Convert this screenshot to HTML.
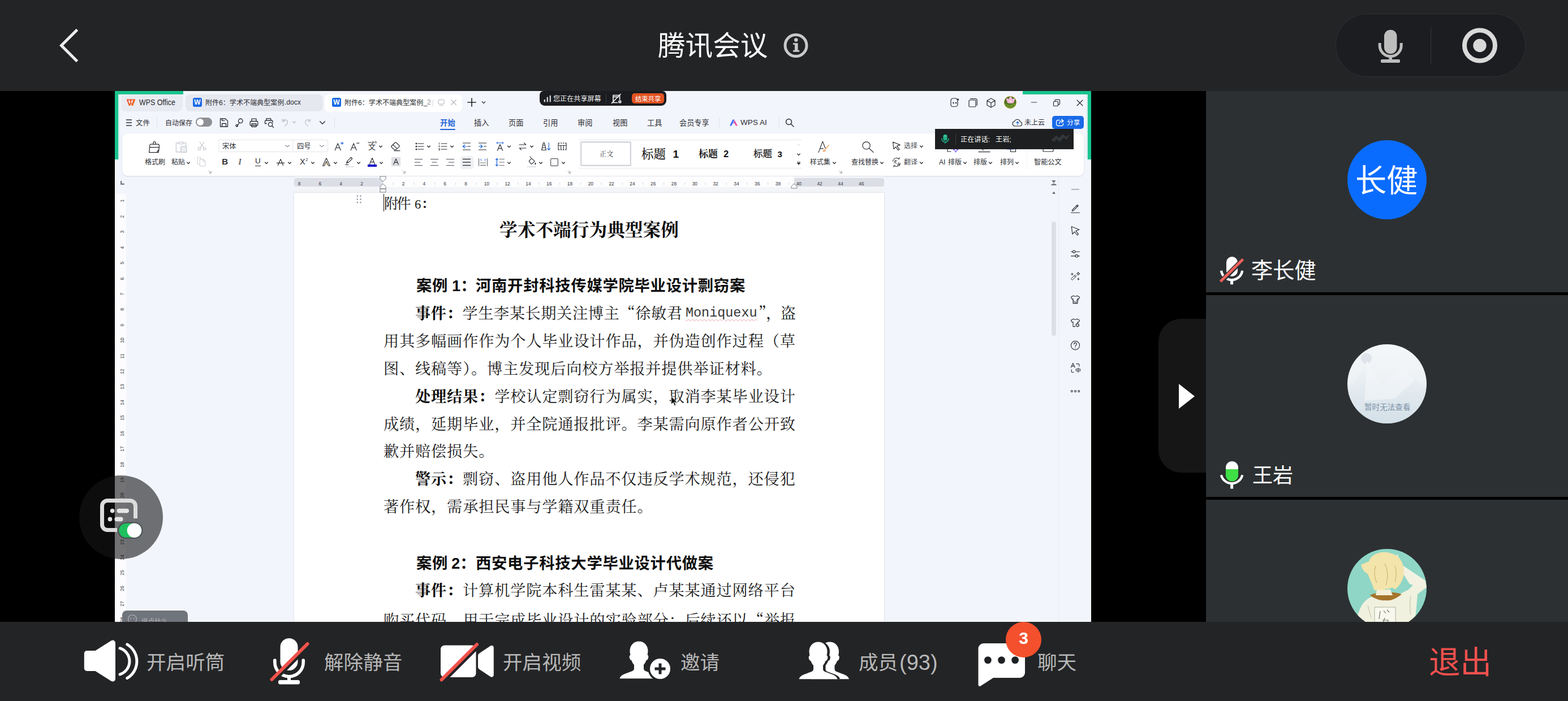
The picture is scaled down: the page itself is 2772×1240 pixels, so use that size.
<!DOCTYPE html><html lang="zh-CN"><head><meta charset="utf-8"><title>腾讯会议</title><style>
html,body{margin:0;padding:0;background:#000}
#app{position:relative;width:2772px;height:1240px;overflow:hidden;background:#000;font-family:"Liberation Sans",sans-serif}
#app div,#app span.l,#app svg{position:absolute}
svg.t{overflow:visible;width:1px;height:1px}
svg.t text{font-family:"Liberation Sans","Noto Sans CJK SC",sans-serif;white-space:pre}
svg.t text.sf{font-family:"Liberation Serif","Noto Serif CJK SC",serif}
svg.t tspan.cq,svg.t text.cq{font-family:"Noto Serif CJK SC","Liberation Serif",serif}
svg.i{overflow:visible}
span.l{white-space:nowrap;display:block}
span.vr{font:400 8.6px/1 'Liberation Sans',sans-serif;color:#3d3f46;transform:translate(-50%,-50%) rotate(-90deg)}
</style></head><body><div id="app">
<!-- wps -->
<main aria-label="共享屏幕：WPS 文档">
<div style="left:203px;top:161px;width:1726px;height:939px;background:#f3f5fc;"></div>
<div style="left:203px;top:161px;width:121px;height:6px;background:#19c38d;"></div>
<div style="left:203px;top:161px;width:6px;height:121px;background:#19c38d;box-shadow:2px 0 2px rgba(25,195,141,.18)"></div>
<div style="left:1808px;top:161px;width:121px;height:6px;background:#19c38d;"></div>
<div style="left:1923px;top:161px;width:6px;height:121px;background:#19c38d;box-shadow:-2px 0 2px rgba(25,195,141,.18)"></div>
<div style="left:214px;top:168px;width:109px;height:29px;background:#e9ebf2;border-radius:0 0 8px 8px"></div>
<svg class="i" style="left:222.5px;top:174.8px" width="18" height="13" viewBox="0 0 18 13" ><defs><linearGradient id="wl" x1="0" y1="0" x2="1" y2="1"><stop offset="0" stop-color="#f0492f"/><stop offset="1" stop-color="#ee7a2a"/></linearGradient></defs><path d="M.6 .5h15.800L12.300 12H9.700L8.500 8.600 7.300 12H4.700zM3.600 2.300l2.400 6.600 1.300-3.700-1-2.900zM9.700 2.300l-1 2.900 1.300 3.700 2.400-6.600z" fill="url(#wl)" fill-rule="evenodd"/></svg>
<span class="l" style="left:246px;top:173.83px;font:400 14px/1 'Liberation Sans',sans-serif;color:#26282d;transform-origin:0 0;transform:scaleX(0.885);">WPS Office</span>
<div style="left:328px;top:167px;width:243px;height:30px;background:#e6e8f0;border-radius:8px"></div>
<div style="left:574px;top:167px;width:243px;height:30.5px;background:#fff;border-radius:8px"></div>
<div style="left:341px;top:173px;width:16px;height:16px;background:#1b6ae6;border-radius:3px"></div>
<span class="l" style="left:349px;top:175.14px;font:700 12px/1 'Liberation Sans',sans-serif;color:#fff;transform:translateX(-50%);">W</span>
<div style="left:587px;top:173px;width:16px;height:16px;background:#1b6ae6;border-radius:3px"></div>
<span class="l" style="left:595px;top:175.14px;font:700 12px/1 'Liberation Sans',sans-serif;color:#fff;transform:translateX(-50%);">W</span>
<svg class="t" style="left:363px;top:185.8px" role="img" aria-label="附件6：学术不端典型案例.docx"><text x="0" y="0" font-size="12.05" fill="#2a2c31">附件6：学术不端典型案例</text></svg>
<span class="l" style="left:502.74px;top:173.87px;font:400 13.4px/1 'Liberation Sans',sans-serif;color:#2a2c31;transform-origin:0 0;transform:scaleX(0.9);">.docx</span>
<svg class="t" style="left:609px;top:185.8px" role="img" aria-label="附件6：学术不端典型案例_2("><text x="0" y="0" font-size="12.05" fill="#2a2c31">附件6：学术不端典型案例</text></svg>
<span class="l" style="left:748.74px;top:173.87px;font:400 13.4px/1 'Liberation Sans',sans-serif;color:#3a3c42;transform-origin:0 0;transform:scaleX(0.9);">_</span>
<span class="l" style="left:755.44px;top:173.87px;font:400 13.4px/1 'Liberation Sans',sans-serif;color:#8f929a;transform-origin:0 0;transform:scaleX(0.9);">2</span>
<span class="l" style="left:762.74px;top:173.87px;font:400 13.4px/1 'Liberation Sans',sans-serif;color:#dde0e6;">(</span>
<svg class="i" style="left:770px;top:171px" width="20" height="20" viewBox="-10 -10 20 20" fill="none" stroke="#b4b7bf" stroke-width="1.1" stroke-linecap="round" stroke-linejoin="round" ><rect x="-5" y="-4.5" width="10" height="7.5" rx="1.5"/><path d="M-3 5.2h6"/></svg>
<svg class="i" style="left:791.5px;top:171px" width="20" height="20" viewBox="-10 -10 20 20" fill="none" stroke="#a9acb5" stroke-width="1.2" stroke-linecap="round" stroke-linejoin="round" ><path d="M-4.3 -4.3L4.3 4.3M4.3 -4.3L-4.3 4.3"/></svg>
<svg class="i" style="left:824px;top:171.3px" width="20" height="20" viewBox="-10 -10 20 20" fill="none" stroke="#26282d" stroke-width="1.7" stroke-linecap="round" stroke-linejoin="round" ><path d="M-7 0H7M0 -7V7"/></svg>
<svg class="i" style="left:850px;top:176.3px" width="10" height="10" viewBox="-5 -5 10 10" fill="none" stroke="#2b2d33" stroke-width="1.3" stroke-linecap="round" stroke-linejoin="round" ><path d="M-2.6 -1 L0 1.6 L2.6 -1"/></svg>
<svg class="i" style="left:1676.5px;top:170.5px" width="22" height="22" viewBox="-11 -11 22 22" fill="none" stroke="#2b2d33" stroke-width="1.2" stroke-linecap="round" stroke-linejoin="round" ><path d="M-7 -4.5c0-2 2-3.5 5-3.5h4l3 3v8c0 2-2 3.5-4 3.5h-5c-2 0-3-1.5-3-3.5z"/><circle cx="-2.5" cy="0" r=".7" fill="#2b2d33"/><circle cx="2" cy="0" r=".7" fill="#2b2d33"/><path d="M5.5 -8.5l.8 1.8 1.8.8-1.8.8-.8 1.8-.8-1.8-1.8-.8 1.8-.8z" fill="#2b2d33" stroke="none"/></svg>
<svg class="i" style="left:1710px;top:171.5px" width="20" height="20" viewBox="-10 -10 20 20" fill="none" stroke="#2b2d33" stroke-width="1.2" stroke-linecap="round" stroke-linejoin="round" ><rect x="-7" y="-5" width="12" height="12" rx="1.5"/><path d="M-4.5 -7.3h9a2.8 2.8 0 0 1 2.8 2.8v9"/></svg>
<svg class="i" style="left:1742px;top:171.5px" width="20" height="20" viewBox="-10 -10 20 20" fill="none" stroke="#2b2d33" stroke-width="1.2" stroke-linecap="round" stroke-linejoin="round" ><path d="M0 -8l7 4v8l-7 4-7-4v-8z M-7 -4l7 4 7-4M0 0v8"/></svg>
<svg class="i" style="left:1774px;top:169px" width="24" height="24" viewBox="0 0 24 24" ><defs><clipPath id="ca"><circle cx="12" cy="12" r="10.600"/></clipPath></defs><circle cx="12" cy="12" r="11.400" fill="#f3df8e"/><g clip-path="url(#ca)"><rect width="24" height="24" fill="#4e6f22"/><path d="M0 15c5-3 9 3 12 1s8-4 12 0v8H0z" fill="#6c8f2c"/><g fill="#f4b6d6"><ellipse cx="12.500" cy="6.500" rx="2.600" ry="4.600"/><ellipse cx="8.600" cy="8.600" rx="2.400" ry="4.400" transform="rotate(-48 8.600 8.600)"/><ellipse cx="16.400" cy="8.600" rx="2.400" ry="4.400" transform="rotate(48 16.400 8.600)"/><ellipse cx="10" cy="11.500" rx="2.200" ry="4" transform="rotate(-80 10 11.500)"/><ellipse cx="15" cy="11.500" rx="2.200" ry="4" transform="rotate(80 15 11.500)"/></g><circle cx="12.500" cy="10" r="1.700" fill="#f7dfe9"/></g></svg>
<svg class="i" style="left:1818px;top:170.5px" width="20" height="20" viewBox="-10 -10 20 20" fill="none" stroke="#3f4147" stroke-width="1.2" stroke-linecap="round" stroke-linejoin="round" ><path d="M-4.800 0H4.800"/></svg>
<svg class="i" style="left:1858px;top:171.5px" width="20" height="20" viewBox="-10 -10 20 20" fill="none" stroke="#2b2d33" stroke-width="1.2" stroke-linecap="round" stroke-linejoin="round" ><rect x="-5.5" y="-2.5" width="8" height="8" rx="1"/><path d="M-2.8 -2.5v-2.2a1 1 0 0 1 1-1h6.3a1 1 0 0 1 1 1v6.3a1 1 0 0 1-1 1H2.5"/></svg>
<svg class="i" style="left:1898.7px;top:171.5px" width="20" height="20" viewBox="-10 -10 20 20" fill="none" stroke="#2b2d33" stroke-width="1.3" stroke-linecap="round" stroke-linejoin="round" ><path d="M-4.8 -4.8L4.8 4.8M4.8 -4.8L-4.8 4.8"/></svg>
<div style="left:953.5px;top:161px;width:224.5px;height:26px;background:#1b1c1f;border-radius:7px 7px 9px 9px"></div>
<svg class="i" style="left:960.5px;top:168px" width="14" height="13" viewBox="0 0 14 13" ><rect x=".7" y="8" width="2.300" height="4.400" fill="#d4d4d4"/><rect x="5.600" y="3.700" width="2.300" height="8.700" fill="#d4d4d4"/><rect x="10.600" y=".8" width="2.300" height="11.600" fill="#d4d4d4"/></svg>
<svg class="t" style="left:978px;top:179px" role="img" aria-label="您正在共享屏幕"><text x="0" y="0" font-size="12.1" fill="#f2f2f2">您正在共享屏幕</text></svg>
<div style="left:1070.5px;top:166px;width:1px;height:16px;background:#3a3b3f;"></div>
<svg class="i" style="left:1079px;top:163.5px" width="22" height="22" viewBox="-11 -11 22 22" fill="none" stroke="#f2f2f2" stroke-width="1.5" stroke-linecap="round" stroke-linejoin="round" ><path d="M-6 -6.500H5.500V1M-6 -6.500V6.500H1.500M-6 -3.600H3" stroke-width="1.700"/><path d="M-8.500 7.500L7 -8.500" stroke-width="1.700"/><circle cx="5.800" cy="5" r="2.700" fill="#f2f2f2" stroke="none"/><path d="M5.200 3.600c1.200.4 1.200 2.200 0 2.800" stroke="#1b1c1f" stroke-width=".9"/></svg>
<div style="left:1117px;top:165px;width:57px;height:18.3px;background:#e35220;border-radius:5px"></div>
<svg class="t" style="left:1123px;top:178.6px" role="img" aria-label="结束共享"><text x="0" y="0" font-size="11.3" fill="#fff">结束共享</text></svg>
<svg class="i" style="left:217.5px;top:206.5px" width="20" height="20" viewBox="-10 -10 20 20" fill="none" stroke="#2b2d33" stroke-width="1.3" stroke-linecap="round" stroke-linejoin="round" ><path d="M-4.5 -5H4.5M-4.5 0H4.5M-4.5 5H4.5"/></svg>
<svg class="t" style="left:239.5px;top:221.5px" role="img" aria-label="文件"><text x="0" y="0" font-size="12.4" fill="#2b2d33">文件</text></svg>
<div style="left:276.5px;top:208px;width:1px;height:17px;background:#dfe2ea;"></div>
<svg class="t" style="left:292px;top:221.5px" role="img" aria-label="自动保存"><text x="0" y="0" font-size="12" fill="#2b2d33">自动保存</text></svg>
<div style="left:346px;top:208px;width:28.5px;height:16px;background:#8f9094;border-radius:8px"></div>
<div style="left:347.6px;top:209.6px;width:12.8px;height:12.8px;background:#fff;border-radius:50%"></div>
<svg class="i" style="left:386.3px;top:206.5px" width="20" height="20" viewBox="-10 -10 20 20" fill="none" stroke="#2b2d33" stroke-width="1.3" stroke-linecap="round" stroke-linejoin="round" ><path d="M-6.5 -7h9l4 4v10h-13z M-3.5 7v-5.5h7V7"/><path d="M-3.5 -7v3.3h4.5"/></svg>
<svg class="i" style="left:413px;top:206.5px" width="20" height="20" viewBox="-10 -10 20 20" fill="none" stroke="#2b2d33" stroke-width="1.3" stroke-linecap="round" stroke-linejoin="round" ><circle cx="2.2" cy="-3.2" r="3.8"/><path d="M0 0c-1.5 2.5-2 4.5-4.3 6.5"/><circle cx="-4.3" cy="5.2" r="1.8"/></svg>
<svg class="i" style="left:439px;top:206.5px" width="20" height="20" viewBox="-10 -10 20 20" fill="none" stroke="#2b2d33" stroke-width="1.3" stroke-linecap="round" stroke-linejoin="round" ><rect x="-6.8" y="-2.5" width="13.6" height="7.5" rx="1.5"/><path d="M-4 -2.5v-4.3h8v4.3M-4 2h8v5.3h-8z"/></svg>
<svg class="i" style="left:466px;top:206.5px" width="20" height="20" viewBox="-10 -10 20 20" fill="none" stroke="#2b2d33" stroke-width="1.3" stroke-linecap="round" stroke-linejoin="round" ><path d="M-7.5 1.5v-4a1.5 1.5 0 0 1 1.5-1.5h10.5a1.5 1.5 0 0 1 1.5 1.5v2.2M-5 -4v-3.3h7.7v3.3M-7.5 1.5h2.8"/><circle cx="2" cy="3" r="3.6"/><path d="M4.8 5.8l2.7 2.7"/></svg>
<svg class="i" style="left:493.5px;top:205.5px" width="20" height="20" viewBox="-10 -10 20 20" fill="none" stroke="#b9bcc4" stroke-width="1.3" stroke-linecap="round" stroke-linejoin="round" ><path d="M-4.3 -1.2L-4.3 -5.6M-4.3 -1.2L0 -1.6M-4.3 -1.4C-1 -6.5 5 -4 4.2 1 3.8 3.6 1.5 5.5 -0.5 6.8"/></svg>
<svg class="i" style="left:514.5px;top:211px" width="10" height="10" viewBox="-5 -5 10 10" fill="none" stroke="#b9bcc4" stroke-width="1.3" stroke-linecap="round" stroke-linejoin="round" ><path d="M-2.2 -1 L0 1.6 L2.2 -1"/></svg>
<svg class="i" style="left:533.5px;top:205.5px" width="20" height="20" viewBox="-10 -10 20 20" fill="none" stroke="#c3c6cd" stroke-width="1.3" stroke-linecap="round" stroke-linejoin="round" ><path d="M4.3 -1.2L4.3 -5.6M4.3 -1.2L0 -1.6M4.3 -1.4C1 -6.5 -5 -4 -4.2 1 -3.8 3.6 -1.5 5.5 .5 6.8"/></svg>
<svg class="i" style="left:559.5px;top:207px" width="20" height="20" viewBox="-10 -10 20 20" fill="none" stroke="#2b2d33" stroke-width="1.4" stroke-linecap="round" stroke-linejoin="round" ><path d="M-4.4 -2.2L0 2.2L4.4 -2.2"/></svg>
<div style="left:590.5px;top:208px;width:1px;height:17px;background:#dfe2ea;"></div>
<svg class="t" style="left:777.5px;top:221.5px" role="img" aria-label="开始"><text x="0" y="0" font-size="13.4" font-weight="700" fill="#1d64d8">开始</text></svg>
<div style="left:777.5px;top:227.5px;width:27.5px;height:2.6px;background:#1d64d8;border-radius:1.3px"></div>
<svg class="t" style="left:838.3px;top:221.5px" role="img" aria-label="插入"><text x="0" y="0" font-size="13.2" fill="#2b2d33">插入</text></svg>
<svg class="t" style="left:899.35px;top:221.5px" role="img" aria-label="页面"><text x="0" y="0" font-size="13.2" fill="#2b2d33">页面</text></svg>
<svg class="t" style="left:960.4px;top:221.5px" role="img" aria-label="引用"><text x="0" y="0" font-size="13.2" fill="#2b2d33">引用</text></svg>
<svg class="t" style="left:1021.45px;top:221.5px" role="img" aria-label="审阅"><text x="0" y="0" font-size="13.2" fill="#2b2d33">审阅</text></svg>
<svg class="t" style="left:1082.5px;top:221.5px" role="img" aria-label="视图"><text x="0" y="0" font-size="13.2" fill="#2b2d33">视图</text></svg>
<svg class="t" style="left:1143.55px;top:221.5px" role="img" aria-label="工具"><text x="0" y="0" font-size="13.2" fill="#2b2d33">工具</text></svg>
<svg class="t" style="left:1201px;top:221.5px" role="img" aria-label="会员专享"><text x="0" y="0" font-size="13.2" fill="#2b2d33">会员专享</text></svg>
<div style="left:1271px;top:208px;width:1px;height:17px;background:#dfe2ea;"></div>
<svg class="i" style="left:1289px;top:209.5px" width="16" height="14" viewBox="0 0 16 14" ><path d="M1 12.5L6.3 1.5h3.2L4.2 12.5z" fill="#3f6df2"/><path d="M8.2 5.6l1.6-3.2 5.2 10.1h-3.3z" fill="#f0559f"/><path d="M6.8 8.3l1.5-2.9 1.5 2.9z" fill="#8a5cf0"/></svg>
<span class="l" style="left:1309px;top:209.69px;font:400 13.6px/1 'Liberation Sans',sans-serif;color:#2b2d33;">WPS AI</span>
<div style="left:1377px;top:208px;width:1px;height:17px;background:#dfe2ea;"></div>
<svg class="i" style="left:1385.5px;top:206.5px" width="20" height="20" viewBox="-10 -10 20 20" fill="none" stroke="#2b2d33" stroke-width="1.4" stroke-linecap="round" stroke-linejoin="round" ><circle cx="-1.5" cy="-1.5" r="5"/><path d="M2.2 2.2L7 7"/></svg>
<svg class="i" style="left:1789px;top:206.5px" width="20" height="20" viewBox="-10 -10 20 20" fill="none" stroke="#2b2d33" stroke-width="1.2" stroke-linecap="round" stroke-linejoin="round" ><path d="M-4.2 6h8.2a3.8 3.8 0 0 0 .6-7.5 5.2 5.2 0 0 0-10-.8A4.2 4.2 0 0 0-4.2 6z"/><path d="M0 3.6V-1.6M-2.2 .4L0 -1.8 2.2 .4" stroke="#1d64d8"/></svg>
<svg class="t" style="left:1811px;top:221.3px" role="img" aria-label="未上云"><text x="0" y="0" font-size="12" fill="#2b2d33">未上云</text></svg>
<div style="left:1859.5px;top:204.5px;width:56.5px;height:23.5px;background:#1a6ae8;border-radius:5px"></div>
<svg class="i" style="left:1863.5px;top:206.5px" width="20" height="20" viewBox="-10 -10 20 20" fill="none" stroke="#fff" stroke-width="1.3" stroke-linecap="round" stroke-linejoin="round" ><path d="M-1 -4.5h-2.6a2.8 2.8 0 0 0-2.8 2.8v4.4a2.8 2.8 0 0 0 2.8 2.8h6.4a2.8 2.8 0 0 0 2.8-2.8V1.5"/><path d="M2.5 -6.2L6.2 -3 2.5 .2M6 -3H3C.5 -3-1.2 -1.2-1.2 1.8"/></svg>
<svg class="t" style="left:1886.3px;top:221.3px" role="img" aria-label="分享"><text x="0" y="0" font-size="11.7" fill="#fff">分享</text></svg>
<div style="left:216px;top:236px;width:1700px;height:75px;background:#fff;border-radius:9px;box-shadow:0 1px 3px rgba(60,70,110,.16)"></div>
<svg class="i" style="left:261.2px;top:248px" width="24" height="24" viewBox="-12 -12 24 24" fill="none" stroke="#2b2d33" stroke-width="1.25" stroke-linecap="round" stroke-linejoin="round" ><path d="M-2 -4.800v-2.600a2 2 0 1 1 4 0v2.600"/><path d="M-8.400 .6v-2.900a2.500 2.500 0 0 1 2.500-2.500h11.800a2.500 2.500 0 0 1 2.500 2.500v2.900"/><path d="M-8.400 .6h16.800l-1.200 9H-9.400z"/><path d="M3.800 9.400c1.700-1.100 2.700-2.600 3.100-4.400"/></svg>
<svg class="t" style="left:255.6px;top:291.3px" role="img" aria-label="格式刷"><text x="0" y="0" font-size="12" fill="#2b2d33">格式刷</text></svg>
<svg class="i" style="left:308.3px;top:248px" width="24" height="24" viewBox="-12 -12 24 24" fill="none" stroke="#c3c6cd" stroke-width="1.2" stroke-linecap="round" stroke-linejoin="round" ><path d="M-3.6 -7.2h-5v16h8.2M3.6 -7.2h5V-1"/><rect x="-3.6" y="-9" width="7.2" height="3.6" rx="1"/><rect x="-.2" y="-.8" width="10" height="10.2" rx="1" fill="#eceef2"/></svg>
<svg class="t" style="left:302.6px;top:291.3px" role="img" aria-label="粘贴"><text x="0" y="0" font-size="12" fill="#2b2d33">粘贴</text></svg>
<svg class="i" style="left:328px;top:282.5px" width="10" height="10" viewBox="-5 -5 10 10" fill="none" stroke="#2b2d33" stroke-width="1.3" stroke-linecap="round" stroke-linejoin="round" ><path d="M-2.3 -1 L0 1.6 L2.3 -1"/></svg>
<svg class="i" style="left:347px;top:248px" width="20" height="20" viewBox="-10 -10 20 20" fill="none" stroke="#c3c6cd" stroke-width="1.1" stroke-linecap="round" stroke-linejoin="round" ><path d="M-4 -7L3.2 3.6M4 -7L-3.2 3.6"/><circle cx="-4.6" cy="5" r="2.3"/><circle cx="4.6" cy="5" r="2.3"/></svg>
<svg class="i" style="left:347px;top:276px" width="20" height="20" viewBox="-10 -10 20 20" fill="none" stroke="#cfd2d8" stroke-width="1.1" stroke-linecap="round" stroke-linejoin="round" ><path d="M-2.6 -4.5v-3.3h-5.2V4.2h3"/><path d="M-3.8 -4.4h6l3.6 3.6v8.6h-9.6z M2 -4.2V-.6h3.6"/></svg>
<svg class="i" style="left:366.5px;top:300.3px" width="8" height="8" viewBox="-4 -4 8 8" fill="none" stroke="#8b8e96" stroke-width="0.9" stroke-linecap="round" stroke-linejoin="round" ><path d="M-2 -2L2 2M2.2 -1.2V2.2H-1.2"/></svg>
<svg class="i" style="left:709.8px;top:300.3px" width="8" height="8" viewBox="-4 -4 8 8" fill="none" stroke="#8b8e96" stroke-width="0.9" stroke-linecap="round" stroke-linejoin="round" ><path d="M-2 -2L2 2M2.2 -1.2V2.2H-1.2"/></svg>
<svg class="i" style="left:1001.8px;top:300.3px" width="8" height="8" viewBox="-4 -4 8 8" fill="none" stroke="#8b8e96" stroke-width="0.9" stroke-linecap="round" stroke-linejoin="round" ><path d="M-2 -2L2 2M2.2 -1.2V2.2H-1.2"/></svg>
<svg class="i" style="left:1481.5px;top:300.3px" width="8" height="8" viewBox="-4 -4 8 8" fill="none" stroke="#8b8e96" stroke-width="0.9" stroke-linecap="round" stroke-linejoin="round" ><path d="M-2 -2L2 2M2.2 -1.2V2.2H-1.2"/></svg>
<div style="left:385.5px;top:246.5px;width:132px;height:22px;background:#fff;box-shadow:inset 0 0 0 1px #e3e5ea;border-radius:3px 0 0 3px"></div>
<div style="left:516.5px;top:246.5px;width:63px;height:22px;background:#fff;box-shadow:inset 0 0 0 1px #e3e5ea;border-radius:0 3px 3px 0"></div>
<svg class="t" style="left:393px;top:262.6px" role="img" aria-label="宋体"><text x="0" y="0" font-size="12.2" fill="#2b2d33">宋体</text></svg>
<svg class="i" style="left:502.8px;top:253.2px" width="10" height="10" viewBox="-5 -5 10 10" fill="none" stroke="#7d8089" stroke-width="1.1" stroke-linecap="round" stroke-linejoin="round" ><path d="M-3.6 -1 L0 1.6 L3.6 -1"/></svg>
<svg class="t" style="left:525.4px;top:262.6px" role="img" aria-label="四号"><text x="0" y="0" font-size="12.2" fill="#2b2d33">四号</text></svg>
<svg class="i" style="left:563.6px;top:253.2px" width="10" height="10" viewBox="-5 -5 10 10" fill="none" stroke="#7d8089" stroke-width="1.1" stroke-linecap="round" stroke-linejoin="round" ><path d="M-3.6 -1 L0 1.6 L3.6 -1"/></svg>
<svg class="i" style="left:587.5px;top:247.5px" width="22" height="22" viewBox="-11 -11 22 22" fill="none" stroke="#2b2d33" stroke-width="1.2" stroke-linecap="round" stroke-linejoin="round" ><path d="M-6.84 6.8 L-1.8 -5.2 L3.24 6.8 M-5.04 2.48 H1.44"/><path d="M3.6 -5.6h4.4M5.8 -7.8v4.4" stroke="#1d64d8"/></svg>
<svg class="i" style="left:615.5px;top:247.5px" width="22" height="22" viewBox="-11 -11 22 22" fill="none" stroke="#2b2d33" stroke-width="1.2" stroke-linecap="round" stroke-linejoin="round" ><path d="M-6.84 6.8 L-1.8 -5.2 L3.24 6.8 M-5.04 2.48 H1.44"/><path d="M3.8 -5.8h4"/></svg>
<svg class="t" style="left:650.5px;top:264.2px" role="img" aria-label="拼音"><text x="0" y="0" font-size="13" fill="#2b2d33">文</text></svg>
<svg class="i" style="left:648.5px;top:241.8px" width="18" height="18" viewBox="-9 -9 18 18" fill="none" stroke="#2b2d33" stroke-width="0.8" stroke-linecap="round" stroke-linejoin="round" ><path d="M-7 0l1.2 2.2 1.2-2.2 1.2 2.2 1.2-2.2M0 .2a1.6 1.6 0 0 1 3 .6h-3.2a1.6 1.6 0 0 0 3 .9M5 2.2V-.6c.5-.6 2.2-.8 2.2 .6v2.2"/></svg>
<svg class="i" style="left:667.5px;top:253.8px" width="10" height="10" viewBox="-5 -5 10 10" fill="none" stroke="#2b2d33" stroke-width="1.3" stroke-linecap="round" stroke-linejoin="round" ><path d="M-2.3 -1 L0 1.6 L2.3 -1"/></svg>
<svg class="i" style="left:687.7px;top:247.7px" width="22" height="22" viewBox="-11 -11 22 22" fill="none" stroke="#2b2d33" stroke-width="1.2" stroke-linecap="round" stroke-linejoin="round" ><path d="M-2.2 5.6l-4.6-4.4a1.3 1.3 0 0 1 0-1.9l6.3-6.1a1.3 1.3 0 0 1 1.8 0l5.5 5.3a1.3 1.3 0 0 1 0 1.9L1.4 5.6z M-4.3 -3l6.6 6.4M-2.2 7.6H8"/></svg>
<svg class="i" style="left:732px;top:248.5px" width="20" height="20" viewBox="-10 -10 20 20" fill="none" stroke="#2b2d33" stroke-width="1.2" stroke-linecap="round" stroke-linejoin="round" ><path d="M-3 -5H7M-3 0H7M-3 5H7"/><circle cx="-6" cy="-5" r=".9"/><circle cx="-6" cy="0" r=".9"/><circle cx="-6" cy="5" r=".9"/></svg>
<svg class="i" style="left:753px;top:253.8px" width="10" height="10" viewBox="-5 -5 10 10" fill="none" stroke="#2b2d33" stroke-width="1.3" stroke-linecap="round" stroke-linejoin="round" ><path d="M-2.3 -1 L0 1.6 L2.3 -1"/></svg>
<svg class="i" style="left:773px;top:248.5px" width="20" height="20" viewBox="-10 -10 20 20" fill="none" stroke="#2b2d33" stroke-width="1.2" stroke-linecap="round" stroke-linejoin="round" ><path d="M-3 -5H7M-3 0H7M-3 5H7"/><path d="M-6.6 -6.6v3M-7.2 -1.2h1.4l-1.4 2h1.4M-7.2 3.6h1.4v3.2h-1.4M-7.2 5.2h1.2" stroke-width=".8"/></svg>
<svg class="i" style="left:794px;top:253.8px" width="10" height="10" viewBox="-5 -5 10 10" fill="none" stroke="#2b2d33" stroke-width="1.3" stroke-linecap="round" stroke-linejoin="round" ><path d="M-2.3 -1 L0 1.6 L2.3 -1"/></svg>
<svg class="i" style="left:815px;top:248.5px" width="20" height="20" viewBox="-10 -10 20 20" fill="none" stroke="#2b2d33" stroke-width="1.2" stroke-linecap="round" stroke-linejoin="round" ><path d="M-6.5 -6H6.5M-6.5 6H6.5"/><path d="M1.5 0H6.5"/><path d="M-6.5 0H-.5M-3.6 -2.8L-6.5 0l2.9 2.8" stroke="#1d64d8"/></svg>
<svg class="i" style="left:843px;top:248.5px" width="20" height="20" viewBox="-10 -10 20 20" fill="none" stroke="#2b2d33" stroke-width="1.2" stroke-linecap="round" stroke-linejoin="round" ><path d="M-6.5 -6H6.5M-6.5 6H6.5"/><path d="M2.6 0H6.5"/><path d="M-6.5 0H-.2M-3.2 -2.8L-.2 0l-3 2.8" stroke="#1d64d8"/></svg>
<svg class="i" style="left:873px;top:247.5px" width="22" height="22" viewBox="-11 -11 22 22" fill="none" stroke="#2b2d33" stroke-width="1.2" stroke-linecap="round" stroke-linejoin="round" ><path d="M-4.62 7.5 L0 -3.5 L4.62 7.5 M-2.97 3.54 H2.97"/><path d="M-6 -6.2H6M-4.2 -7.8L-6 -6.2l1.8 1.6M4.2 -7.8L6 -6.2 4.2 -4.6" stroke="#1d64d8" stroke-width="1"/></svg>
<svg class="i" style="left:894.6px;top:253.8px" width="10" height="10" viewBox="-5 -5 10 10" fill="none" stroke="#2b2d33" stroke-width="1.3" stroke-linecap="round" stroke-linejoin="round" ><path d="M-2.3 -1 L0 1.6 L2.3 -1"/></svg>
<svg class="i" style="left:913.7px;top:248.5px" width="20" height="20" viewBox="-10 -10 20 20" fill="none" stroke="#2b2d33" stroke-width="1.2" stroke-linecap="round" stroke-linejoin="round" ><path d="M-6 -3H5.6M2.6 -6l3 3M6 3H-5.6M-2.6 6l-3-3"/></svg>
<svg class="i" style="left:934.5px;top:253.8px" width="10" height="10" viewBox="-5 -5 10 10" fill="none" stroke="#2b2d33" stroke-width="1.3" stroke-linecap="round" stroke-linejoin="round" ><path d="M-2.3 -1 L0 1.6 L2.3 -1"/></svg>
<svg class="i" style="left:954px;top:247.5px" width="22" height="22" viewBox="-11 -11 22 22" fill="none" stroke="#2b2d33" stroke-width="1.15" stroke-linecap="round" stroke-linejoin="round" ><path d="M-7.4 6.5l3-13h1.8l3 13zM-6.4 2.2h5.6M-5.6 -2h4"/><path d="M5.2 -6.5V6.2M2.6 3.4l2.6 2.9 2.6-2.9" stroke="#1d64d8"/></svg>
<svg class="i" style="left:982.5px;top:247.5px" width="22" height="22" viewBox="-11 -11 22 22" fill="none" stroke="#2b2d33" stroke-width="1.2" stroke-linecap="round" stroke-linejoin="round" ><path d="M-7 -5.8H7M-7 5.8H7" stroke-dasharray="2.4 1.6" stroke-linecap="butt"/><path d="M-7 -5.8V5.8M7 -5.8V5.8M-7 -1.8H7M-2.3 -1.8V5.8M2.3 -1.8V5.8" stroke-width="1.1"/></svg>
<span class="l" style="left:392.3px;top:278.43px;font:700 15px/1 'Liberation Sans',sans-serif;color:#2b2d33;">B</span>
<span class="l" style="left:421.6px;top:278.63px;font:400 15px/1 'Liberation Serif',sans-serif;color:#2b2d33;font-style:italic">I</span>
<span class="l" style="left:451px;top:278.37px;font:400 13.4px/1 'Liberation Sans',sans-serif;color:#2b2d33;">U</span>
<div style="left:451px;top:293.2px;width:10px;height:1.2px;background:#2b2d33;"></div>
<svg class="i" style="left:466.4px;top:282.5px" width="10" height="10" viewBox="-5 -5 10 10" fill="none" stroke="#2b2d33" stroke-width="1.3" stroke-linecap="round" stroke-linejoin="round" ><path d="M-2.3 -1 L0 1.6 L2.3 -1"/></svg>
<svg class="i" style="left:486.3px;top:276.8px" width="20" height="20" viewBox="-10 -10 20 20" fill="none" stroke="#2b2d33" stroke-width="1.15" stroke-linecap="round" stroke-linejoin="round" ><path d="M-4.62 5.5 L0 -5.5 L4.62 5.5"/><path d="M-6.6 1.4H6.6"/></svg>
<svg class="i" style="left:507px;top:282.5px" width="10" height="10" viewBox="-5 -5 10 10" fill="none" stroke="#2b2d33" stroke-width="1.3" stroke-linecap="round" stroke-linejoin="round" ><path d="M-2.3 -1 L0 1.6 L2.3 -1"/></svg>
<span class="l" style="left:530px;top:278.88px;font:400 14.5px/1 'Liberation Sans',sans-serif;color:#2b2d33;">X</span>
<span class="l" style="left:540.2px;top:279.21px;font:400 7.5px/1 'Liberation Sans',sans-serif;color:#2b2d33;">2</span>
<svg class="i" style="left:547.7px;top:282.5px" width="10" height="10" viewBox="-5 -5 10 10" fill="none" stroke="#2b2d33" stroke-width="1.3" stroke-linecap="round" stroke-linejoin="round" ><path d="M-2.3 -1 L0 1.6 L2.3 -1"/></svg>
<svg class="i" style="left:567px;top:276.8px" width="20" height="20" viewBox="-10 -10 20 20" fill="none" stroke="#2b2d33" stroke-width="1.15" stroke-linecap="round" stroke-linejoin="round" ><path d="M-6.4 6.2L0 -7.2 6.4 6.2H3.6L0 -1.6 -3.6 6.2z"/><path d="M-1.9 2.6h3.8" stroke="#f0a040"/></svg>
<svg class="i" style="left:588px;top:282.5px" width="10" height="10" viewBox="-5 -5 10 10" fill="none" stroke="#2b2d33" stroke-width="1.3" stroke-linecap="round" stroke-linejoin="round" ><path d="M-2.3 -1 L0 1.6 L2.3 -1"/></svg>
<svg class="i" style="left:607.5px;top:275px" width="20" height="20" viewBox="-10 -10 20 20" fill="none" stroke="#2b2d33" stroke-width="1.1" stroke-linecap="round" stroke-linejoin="round" ><path d="M-5.6 3.6l1.2-3.2 7-7 2.2 2.2-7 7z M-4.2 .6l2 2M-7 6.4h4.5"/></svg>
<div style="left:610.5px;top:293.5px;width:14.5px;height:2.6px;background:#f2f2f4;box-shadow:inset 0 0 0 .6px #cfd2d8"></div>
<svg class="i" style="left:628.6px;top:282.5px" width="10" height="10" viewBox="-5 -5 10 10" fill="none" stroke="#2b2d33" stroke-width="1.3" stroke-linecap="round" stroke-linejoin="round" ><path d="M-2.3 -1 L0 1.6 L2.3 -1"/></svg>
<svg class="i" style="left:648px;top:274.6px" width="20" height="20" viewBox="-10 -10 20 20" fill="none" stroke="#2b2d33" stroke-width="1.2" stroke-linecap="round" stroke-linejoin="round" ><path d="M-4.62 5.5 L0 -5.5 L4.62 5.5 M-2.97 1.54 H2.97"/></svg>
<div style="left:650.3px;top:291.4px;width:15.6px;height:3.2px;background:#0a0acc;"></div>
<svg class="i" style="left:669px;top:282.5px" width="10" height="10" viewBox="-5 -5 10 10" fill="none" stroke="#2b2d33" stroke-width="1.3" stroke-linecap="round" stroke-linejoin="round" ><path d="M-2.3 -1 L0 1.6 L2.3 -1"/></svg>
<div style="left:691.8px;top:278.2px;width:16px;height:16px;background:#dfe0e3;"></div>
<svg class="i" style="left:689.8px;top:276.4px" width="20" height="20" viewBox="-10 -10 20 20" fill="none" stroke="#2b2d33" stroke-width="1.15" stroke-linecap="round" stroke-linejoin="round" ><path d="M-4.2 5 L0 -5 L4.2 5 M-2.7 1.4 H2.7"/></svg>
<svg class="i" style="left:729.8px;top:277px" width="20" height="20" viewBox="-10 -10 20 20" fill="none" stroke="#6d7079" stroke-width="1.25" stroke-linecap="round" stroke-linejoin="round" ><path d="M-6.6 -5.5H6.6M-6.6 0H2.6M-6.6 5.5H6.6"/></svg>
<svg class="i" style="left:758.2px;top:277px" width="20" height="20" viewBox="-10 -10 20 20" fill="none" stroke="#6d7079" stroke-width="1.25" stroke-linecap="round" stroke-linejoin="round" ><path d="M-6.6 -5.5H6.6M-4 0H4M-6.6 5.5H6.6"/></svg>
<svg class="i" style="left:786.2px;top:277px" width="20" height="20" viewBox="-10 -10 20 20" fill="none" stroke="#6d7079" stroke-width="1.25" stroke-linecap="round" stroke-linejoin="round" ><path d="M-6.6 -5.5H6.6M-2.6 0H6.6M-6.6 5.5H6.6"/></svg>
<div style="left:813.5px;top:275.5px;width:23px;height:23px;background:#eff0f3;border-radius:4px"></div>
<svg class="i" style="left:815px;top:277px" width="20" height="20" viewBox="-10 -10 20 20" fill="none" stroke="#3c3e45" stroke-width="1.35" stroke-linecap="round" stroke-linejoin="round" ><path d="M-6.6 -5.5H6.6M-6.6 0H6.6M-6.6 5.5H6.6"/></svg>
<svg class="i" style="left:842.7px;top:276px" width="22" height="22" viewBox="-11 -11 22 22" fill="none" stroke="#6d7079" stroke-width="1.2" stroke-linecap="round" stroke-linejoin="round" ><path d="M-7.5 -6.5V6.5M7.5 -6.5V6.5"/><path d="M-4.6 1H4.6M-4.6 5.4H4.6"/><path d="M-4.4 -4.4l1.6-1.6M-4.4 -4.4l1.6 1.6M4.4 -4.4l-1.6-1.6M4.4 -4.4l-1.6 1.6" stroke="#1d64d8" stroke-width="1"/></svg>
<svg class="i" style="left:873px;top:276px" width="22" height="22" viewBox="-11 -11 22 22" fill="none" stroke="#2b2d33" stroke-width="1.2" stroke-linecap="round" stroke-linejoin="round" ><path d="M-1 -5.5H7.4M-1 0H7.4M-1 5.5H7.4" stroke="#6d7079"/><path d="M-5.6 -6.6V6.6M-7.6 -4.4l2-2.2 2 2.2M-7.6 4.4l2 2.2 2-2.2" stroke="#1d64d8"/></svg>
<svg class="i" style="left:894.6px;top:282.5px" width="10" height="10" viewBox="-5 -5 10 10" fill="none" stroke="#2b2d33" stroke-width="1.3" stroke-linecap="round" stroke-linejoin="round" ><path d="M-2.3 -1 L0 1.6 L2.3 -1"/></svg>
<svg class="i" style="left:928.8px;top:273.5px" width="22" height="22" viewBox="-11 -11 22 22" fill="none" stroke="#2b2d33" stroke-width="1.15" stroke-linecap="round" stroke-linejoin="round" ><path d="M-4.8 .2l4.6-5 5.4 5-4.6 4.6a1.2 1.2 0 0 1-1.7 0z M-1.4 -6.2l-1.6-1.6"/><path d="M6.4 2.2c.8 1.2 1.2 1.8 1.2 2.5a1.2 1.2 0 0 1-2.4 0c0-.7.4-1.3 1.2-2.5z" fill="#2b2d33" stroke="none"/></svg>
<div style="left:932.3px;top:293.5px;width:14.5px;height:2.6px;background:#f2f2f4;box-shadow:inset 0 0 0 .6px #cfd2d8"></div>
<svg class="i" style="left:950.5px;top:282.5px" width="10" height="10" viewBox="-5 -5 10 10" fill="none" stroke="#2b2d33" stroke-width="1.3" stroke-linecap="round" stroke-linejoin="round" ><path d="M-2.3 -1 L0 1.6 L2.3 -1"/></svg>
<svg class="i" style="left:970px;top:277px" width="20" height="20" viewBox="-10 -10 20 20" fill="none" stroke="#565961" stroke-width="1.25" stroke-linecap="round" stroke-linejoin="round" ><rect x="-6.4" y="-6.4" width="12.8" height="12.8" rx="1.6"/></svg>
<svg class="i" style="left:991px;top:282.5px" width="10" height="10" viewBox="-5 -5 10 10" fill="none" stroke="#2b2d33" stroke-width="1.3" stroke-linecap="round" stroke-linejoin="round" ><path d="M-2.3 -1 L0 1.6 L2.3 -1"/></svg>
<div style="left:1022.5px;top:246.5px;width:394px;height:51px;background:#fff;box-shadow:inset 0 1px 0 #e4e6eb,inset 0 -1px 0 #e4e6eb"></div>
<div style="left:1026px;top:250px;width:89.5px;height:44px;background:#fff;box-shadow:inset 0 0 0 2.4px #d4d6db;border-radius:2px"></div>
<svg class="t" style="left:1059.6px;top:276.6px" role="img" aria-label="正文"><text class="sf" x="0" y="0" font-size="12.2" fill="#3a3a3a">正文</text></svg>
<svg class="t" style="left:1134px;top:279.6px" role="img" aria-label="标题"><text class="sf" x="0" y="0" font-size="21.4" fill="#111" stroke="#111" stroke-width="0.25">标题</text></svg>
<span class="l" style="left:1189.5px;top:262.61px;font:700 19px/1 'Liberation Sans',sans-serif;color:#111;">1</span>
<svg class="t" style="left:1235px;top:278.4px" role="img" aria-label="标题"><text class="sf" x="0" y="0" font-size="17" font-weight="700" fill="#111">标题</text></svg>
<span class="l" style="left:1279px;top:263.67px;font:700 16.5px/1 'Liberation Sans',sans-serif;color:#111;">2</span>
<svg class="t" style="left:1331.6px;top:278.2px" role="img" aria-label="标题"><text class="sf" x="0" y="0" font-size="16.5" fill="#111" stroke="#111" stroke-width="0.3">标题</text></svg>
<span class="l" style="left:1374.5px;top:264.82px;font:700 15px/1 'Liberation Sans',sans-serif;color:#111;">3</span>
<svg class="i" style="left:1407px;top:251px" width="10" height="10" viewBox="-5 -5 10 10" fill="none" stroke="#d0d3d9" stroke-width="1" stroke-linecap="round" stroke-linejoin="round" ><path d="M-2.2 -1 L0 1.6 L2.2 -1"/></svg>
<svg class="i" style="left:1407px;top:268px" width="10" height="10" viewBox="-5 -5 10 10" fill="none" stroke="#2b2d33" stroke-width="1.2" stroke-linecap="round" stroke-linejoin="round" ><path d="M-2.2 -1 L0 1.6 L2.2 -1"/></svg>
<svg class="i" style="left:1407px;top:283.8px" width="10" height="10" viewBox="-5 -5 10 10" fill="none" stroke="#2b2d33" stroke-width="1" stroke-linecap="round" stroke-linejoin="round" ><path d="M-2.4 -2.2H2.4"/><path d="M-2.4 -.2L0 2.2 2.4 -.2z" fill="#2b2d33"/></svg>
<svg class="i" style="left:1443px;top:247px" width="26" height="26" viewBox="-13 -13 26 26" fill="none" stroke="#2b2d33" stroke-width="1.15" stroke-linecap="round" stroke-linejoin="round" ><path d="M-9 9.6L-1.6 -9.8 3 2.2M-6.2 2.8h5.6"/><path d="M9.2 -3.2L3.4 3.4M2 4.8c-1.2-.2-2.6 1.2-2.6 3 1.8.4 3.6-.4 3.8-1.8z" stroke="#f08a3c"/></svg>
<svg class="t" style="left:1432px;top:291.3px" role="img" aria-label="样式集"><text x="0" y="0" font-size="12" fill="#2b2d33">样式集</text></svg>
<svg class="i" style="left:1469.5px;top:282.5px" width="10" height="10" viewBox="-5 -5 10 10" fill="none" stroke="#2b2d33" stroke-width="1.3" stroke-linecap="round" stroke-linejoin="round" ><path d="M-2.3 -1 L0 1.6 L2.3 -1"/></svg>
<svg class="i" style="left:1521px;top:247px" width="26" height="26" viewBox="-13 -13 26 26" fill="none" stroke="#2b2d33" stroke-width="1.2" stroke-linecap="round" stroke-linejoin="round" ><circle cx="-2.4" cy="-2.6" r="6.6"/><path d="M2.4 2.2L10.2 9.6"/></svg>
<svg class="t" style="left:1504.8px;top:291.3px" role="img" aria-label="查找替换"><text x="0" y="0" font-size="12" fill="#2b2d33">查找替换</text></svg>
<svg class="i" style="left:1554px;top:282.5px" width="10" height="10" viewBox="-5 -5 10 10" fill="none" stroke="#2b2d33" stroke-width="1.3" stroke-linecap="round" stroke-linejoin="round" ><path d="M-2.3 -1 L0 1.6 L2.3 -1"/></svg>
<svg class="i" style="left:1575.2px;top:248px" width="20" height="20" viewBox="-10 -10 20 20" fill="none" stroke="#2b2d33" stroke-width="1.15" stroke-linecap="round" stroke-linejoin="round" ><path d="M-6.4 -6.8L6.2 -1.6.6 .4 5 6.2 2.8 7.6-1.6 1.8-5 5.6z"/></svg>
<svg class="t" style="left:1597.5px;top:262.4px" role="img" aria-label="选择"><text x="0" y="0" font-size="12" fill="#4a4d55">选择</text></svg>
<svg class="i" style="left:1624.3px;top:253.8px" width="10" height="10" viewBox="-5 -5 10 10" fill="none" stroke="#2b2d33" stroke-width="1.3" stroke-linecap="round" stroke-linejoin="round" ><path d="M-2.3 -1 L0 1.6 L2.3 -1"/></svg>
<svg class="i" style="left:1575.2px;top:276.8px" width="20" height="20" viewBox="-10 -10 20 20" fill="none" stroke="#2b2d33" stroke-width="1.05" stroke-linecap="round" stroke-linejoin="round" ><path d="M-6.6 -1.6a6.8 6.8 0 0 1 11-4.4M6.6 1.6a6.8 6.8 0 0 1-11 4.4M5.4 -8.2L4.6 -5.6 2 -6.4M-5.4 8.2l.8-2.6 2.6.8" stroke-dasharray="2.6 1.4"/><path d="M-4 -2.2h4.6M-1.8 -3.6c0 3-1.2 4.6-2.6 5.6M-3.4 -.4c.8 1.2 2 2 3.4 2.6M1.4 6L3.6 .6 5.8 6M2.2 4.4h2.8" stroke-width=".9"/></svg>
<svg class="t" style="left:1597.5px;top:291.3px" role="img" aria-label="翻译"><text x="0" y="0" font-size="12" fill="#4a4d55">翻译</text></svg>
<svg class="i" style="left:1624.3px;top:282.5px" width="10" height="10" viewBox="-5 -5 10 10" fill="none" stroke="#2b2d33" stroke-width="1.3" stroke-linecap="round" stroke-linejoin="round" ><path d="M-2.3 -1 L0 1.6 L2.3 -1"/></svg>
<span class="l" style="left:1660px;top:280.6px;font:400 12.6px/1 'Liberation Sans',sans-serif;color:#2b2d33;transform-origin:0 0;transform:scaleX(0.95);">AI</span>
<svg class="t" style="left:1676.3px;top:291.3px" role="img" aria-label="排版"><text x="0" y="0" font-size="12" fill="#2b2d33">排版</text></svg>
<svg class="i" style="left:1700.7px;top:282.5px" width="10" height="10" viewBox="-5 -5 10 10" fill="none" stroke="#2b2d33" stroke-width="1.3" stroke-linecap="round" stroke-linejoin="round" ><path d="M-2.3 -1 L0 1.6 L2.3 -1"/></svg>
<svg class="t" style="left:1721px;top:291.3px" role="img" aria-label="排版"><text x="0" y="0" font-size="12" fill="#2b2d33">排版</text></svg>
<svg class="i" style="left:1746px;top:282.5px" width="10" height="10" viewBox="-5 -5 10 10" fill="none" stroke="#2b2d33" stroke-width="1.3" stroke-linecap="round" stroke-linejoin="round" ><path d="M-2.3 -1 L0 1.6 L2.3 -1"/></svg>
<svg class="t" style="left:1767.6px;top:291.3px" role="img" aria-label="排列"><text x="0" y="0" font-size="12" fill="#2b2d33">排列</text></svg>
<svg class="i" style="left:1792.5px;top:282.5px" width="10" height="10" viewBox="-5 -5 10 10" fill="none" stroke="#2b2d33" stroke-width="1.3" stroke-linecap="round" stroke-linejoin="round" ><path d="M-2.3 -1 L0 1.6 L2.3 -1"/></svg>
<div style="left:1815px;top:248px;width:1px;height:52px;background:#f5f6f9;"></div>
<svg class="t" style="left:1828px;top:291.3px" role="img" aria-label="智能公文"><text x="0" y="0" font-size="12.2" fill="#2b2d33">智能公文</text></svg>
<svg class="i" style="left:1670px;top:251px" width="26" height="26" viewBox="-13 -13 26 26" fill="none" stroke="#2b2d33" stroke-width="1.2" stroke-linecap="round" stroke-linejoin="round" ><path d="M-8 -6v10h6"/><path d="M6.6 -3.4l1.3 3 3 1.3-3 1.3-1.3 3-1.3-3-3-1.3 3-1.3z" stroke="#7a5cf0"/></svg>
<svg class="i" style="left:1727px;top:251px" width="26" height="26" viewBox="-13 -13 26 26" fill="none" stroke="#2b2d33" stroke-width="1.2" stroke-linecap="round" stroke-linejoin="round" ><path d="M-10 4.6H10M-6 -6L-1.8 2M-1.8 2"/></svg>
<svg class="i" style="left:1775px;top:250px" width="26" height="26" viewBox="-13 -13 26 26" fill="none" stroke="#2b2d33" stroke-width="1.2" stroke-linecap="round" stroke-linejoin="round" ><rect x="-8" y="-8" width="11" height="9" stroke="#4f7df0"/><rect x="-1.5" y="-2.5" width="9" height="8"/></svg>
<svg class="i" style="left:1840px;top:251px" width="26" height="26" viewBox="-13 -13 26 26" fill="none" stroke="#2b2d33" stroke-width="1.2" stroke-linecap="round" stroke-linejoin="round" ><rect x="-9" y="-10" width="18" height="14" rx="1"/><path d="M-5 -1h10"/></svg>
<div style="left:1871px;top:312px;width:1px;height:800px;background:#e6e9f1;"></div>
<div style="left:1859px;top:392px;width:8px;height:202px;background:#dcdfe7;border-radius:4px"></div>
<svg class="i" style="left:1858px;top:335.5px" width="10" height="10" viewBox="-5 -5 10 10" fill="none" stroke="#2b2d33" stroke-width="1.25" stroke-linecap="round" stroke-linejoin="round" ><path d="M-2.800 1.800L0 -2.200 2.800 1.800z" fill="#5c5f68" stroke="none"/></svg>
<svg class="i" style="left:1857px;top:318px" width="12" height="12" viewBox="-6 -6 12 12" fill="none" stroke="#2b2d33" stroke-width="1.25" stroke-linecap="round" stroke-linejoin="round" ><path d="M-3 -4.600h6L0 -1.200z M-4.400 3.800a2 2 0 0 1 2-2h4.800a2 2 0 0 1 2 2M0 -.8v2.400" fill="#6b6e77" stroke="#6b6e77" stroke-width=".8"/></svg>
<svg class="i" style="left:1890.5px;top:325.3px" width="20" height="20" viewBox="-10 -10 20 20" fill="none" stroke="#9a9da6" stroke-width="1.3" stroke-linecap="round" stroke-linejoin="round" ><path d="M-6.500 0H6.500"/></svg>
<svg class="i" style="left:1889.5px;top:357.5px" width="22" height="22" viewBox="-11 -11 22 22" fill="none" stroke="#2b2d33" stroke-width="1.15" stroke-linecap="round" stroke-linejoin="round" ><path d="M-3.400 3.600l-2.200.6.600-2.200 8.600-8.600 1.600 1.600z M2.200 -5.200l1.600 1.600M-7.500 7.200H7.500"/></svg>
<svg class="i" style="left:1889.5px;top:397.4px" width="22" height="22" viewBox="-11 -11 22 22" fill="none" stroke="#2b2d33" stroke-width="1.15" stroke-linecap="round" stroke-linejoin="round" ><path d="M-6.800 -7.200L7 -1.800 1 .400 5.600 6.400 3.400 8-1.200 2-5 6.200z"/></svg>
<svg class="i" style="left:1889.5px;top:437.8px" width="22" height="22" viewBox="-11 -11 22 22" fill="none" stroke="#2b2d33" stroke-width="1.15" stroke-linecap="round" stroke-linejoin="round" ><path d="M-7.500 -3.800h3M.6 -3.800H7.500M-7.500 3.800H.200M4.800 3.800H7.500"/><circle cx="-2.400" cy="-3.800" r="2.200"/><circle cx="2.500" cy="3.800" r="2.200"/></svg>
<svg class="i" style="left:1889.5px;top:478px" width="22" height="22" viewBox="-11 -11 22 22" fill="none" stroke="#2b2d33" stroke-width="1" stroke-linecap="round" stroke-linejoin="round" ><path d="M-7.400 4.200l7-7 2.200 2.200-7 7z M-1.800 -1.200l2.200 2.200M5.200 -7.600l.8 2 2 .8-2 .8-.8 2-.8-2-2-.8 2-.8z M-5.600 -5.800l.5 1.200 1.200.5-1.200.5-.5 1.200-.5-1.200-1.200-.5 1.200-.5z M5.400 3l.5 1.200 1.200.5-1.200.5-.5 1.200-.5-1.200-1.200-.5 1.200-.5z"/></svg>
<svg class="i" style="left:1889.5px;top:519px" width="22" height="22" viewBox="-11 -11 22 22" fill="none" stroke="#2b2d33" stroke-width="1.1" stroke-linecap="round" stroke-linejoin="round" ><path d="M-3 -7c.8 1.600 5.200 1.600 6 0l4.600 2.400-1.800 3.800-1.800-.8V6.600h-8V-1.600l-1.800.8-1.800-3.800z"/><path d="M1 5.400c0-3 1.600-5.400 4.200-6.400-.2 3.200-1.400 5.400-4.200 6.400zM-1.200 4.800c-.2-2-1.200-3.400-2.800-4 .2 2 1 3.400 2.800 4z" stroke-width=".8"/></svg>
<svg class="i" style="left:1889.5px;top:559.5px" width="22" height="22" viewBox="-11 -11 22 22" fill="none" stroke="#2b2d33" stroke-width="1.1" stroke-linecap="round" stroke-linejoin="round" ><path d="M-3 -7c.8 1.600 5.200 1.600 6 0l4.600 2.400-1.800 3.800-1.800-.8v2M-4 6.600V-1.600l-1.800.8-1.800-3.800L-3 -7M-4 6.600h4"/><circle cx="3.800" cy="4" r="2.400"/><path d="M3.800 .6v1M3.800 6.400v1M.4 4h1M6.200 4h1M1.400 1.600l.7.700M5.500 5.700l.7.700" stroke-width=".8"/></svg>
<svg class="i" style="left:1889.5px;top:600px" width="22" height="22" viewBox="-11 -11 22 22" fill="none" stroke="#2b2d33" stroke-width="1.15" stroke-linecap="round" stroke-linejoin="round" ><circle r="7.600"/><path d="M-2.400 -2.200c0-3.200 4.800-3.200 4.800-.2 0 2-2.400 2-2.400 4.200M0 4.400v.2" stroke-width="1.200"/></svg>
<svg class="i" style="left:1889.5px;top:640.3px" width="22" height="22" viewBox="-11 -11 22 22" fill="none" stroke="#2b2d33" stroke-width="1.1" stroke-linecap="round" stroke-linejoin="round" ><path d="M-7.600 -1l3.400-7.400L-.8 -1M-6.400 -3.400h4.600M2 -7.400h3.400a1.500 1.500 0 0 1 1.500 1.500V-3M-6.800 2.800V6a1.500 1.500 0 0 0 1.500 1.500h2.500"/><path d="M1.600 1.800h7v3.400h-7z M5.100 -.2v8.200" stroke-width="1"/></svg>
<svg class="i" style="left:1889.5px;top:681px" width="22" height="22" viewBox="-11 -11 22 22" fill="none" stroke="#2b2d33" stroke-width="1.1" stroke-linecap="round" stroke-linejoin="round" ><circle cx="-6.200" r="1.500"/><circle r="1.500"/><circle cx="6.200" r="1.500"/></svg>
<div style="left:1653px;top:228.3px;width:245px;height:35.5px;background:#1d1f21;"></div>
<svg class="i" style="left:1664px;top:237px" width="14" height="18" viewBox="0 0 14 18" ><rect x="3.4" y=".8" width="7.2" height="11" rx="3.6" fill="#1fb08a"/><path d="M1 7.8v.6a6 6 0 0 0 12 0v-.6" fill="none" stroke="#1fb08a" stroke-width="1.6"/><path d="M7 14.2v2.6" stroke="#1fb08a" stroke-width="1.8"/><path d="M4.4 3.6h5.2" stroke="#7fe0c4" stroke-width=".8"/></svg>
<div style="left:1689px;top:236px;width:1px;height:20px;background:#3a3c3f;"></div>
<svg class="t" style="left:1698px;top:250.6px" role="img" aria-label="正在讲话:"><text x="0" y="0" font-size="12.2" fill="#fff">正在讲话:</text></svg>
<svg class="t" style="left:1759.5px;top:250.6px" role="img" aria-label="王岩;"><text x="0" y="0" font-size="12.2" fill="#fff">王岩;</text></svg>
<svg class="i" style="left:1856px;top:236px" width="40" height="22" viewBox="0 0 40 22" ><path d="M2 12l9-8 5 4 7-7 5 5 8-5-6 10-6-3-7 7-5-5-4 5z" fill="#3a3d40" opacity=".8"/></svg>
<!-- doc -->
<div style="left:519.5px;top:311.5px;width:1043.5px;height:29px;background:#fdfdfe;border-radius:4px 4px 0 0"></div>
<div style="left:519.5px;top:330.5px;width:1043.5px;height:10px;background:#f4f5f8;"></div>
<div style="left:519.5px;top:311.5px;width:157px;height:29px;background:#f3f4f8;border-radius:4px 0 0 0"></div>
<div style="left:1404px;top:311.5px;width:159px;height:29px;background:#f3f4f8;border-radius:0 4px 0 0"></div>
<div style="left:519.5px;top:315.2px;width:157px;height:14.8px;background:#dcdee6;border-radius:4px 0 0 4px"></div>
<div style="left:1404px;top:315.2px;width:159px;height:14.8px;background:#dcdee6;border-radius:0 4px 4px 0"></div>
<span class="l" style="left:529.1px;top:320.9px;font:400 8.4px/1 'Liberation Sans',sans-serif;color:#34363c;transform:translateX(-50%);">8</span>
<span class="l" style="left:565.9px;top:320.9px;font:400 8.4px/1 'Liberation Sans',sans-serif;color:#34363c;transform:translateX(-50%);">6</span>
<span class="l" style="left:602.7px;top:320.9px;font:400 8.4px/1 'Liberation Sans',sans-serif;color:#34363c;transform:translateX(-50%);">4</span>
<span class="l" style="left:639.5px;top:320.9px;font:400 8.4px/1 'Liberation Sans',sans-serif;color:#34363c;transform:translateX(-50%);">2</span>
<span class="l" style="left:713.1px;top:320.9px;font:400 8.4px/1 'Liberation Sans',sans-serif;color:#34363c;transform:translateX(-50%);">2</span>
<span class="l" style="left:749.9px;top:320.9px;font:400 8.4px/1 'Liberation Sans',sans-serif;color:#34363c;transform:translateX(-50%);">4</span>
<span class="l" style="left:786.7px;top:320.9px;font:400 8.4px/1 'Liberation Sans',sans-serif;color:#34363c;transform:translateX(-50%);">6</span>
<span class="l" style="left:823.5px;top:320.9px;font:400 8.4px/1 'Liberation Sans',sans-serif;color:#34363c;transform:translateX(-50%);">8</span>
<span class="l" style="left:860.3px;top:320.9px;font:400 8.4px/1 'Liberation Sans',sans-serif;color:#34363c;transform:translateX(-50%);">10</span>
<span class="l" style="left:897.1px;top:320.9px;font:400 8.4px/1 'Liberation Sans',sans-serif;color:#34363c;transform:translateX(-50%);">12</span>
<span class="l" style="left:933.9px;top:320.9px;font:400 8.4px/1 'Liberation Sans',sans-serif;color:#34363c;transform:translateX(-50%);">14</span>
<span class="l" style="left:970.7px;top:320.9px;font:400 8.4px/1 'Liberation Sans',sans-serif;color:#34363c;transform:translateX(-50%);">16</span>
<span class="l" style="left:1007.5px;top:320.9px;font:400 8.4px/1 'Liberation Sans',sans-serif;color:#34363c;transform:translateX(-50%);">18</span>
<span class="l" style="left:1044.3px;top:320.9px;font:400 8.4px/1 'Liberation Sans',sans-serif;color:#34363c;transform:translateX(-50%);">20</span>
<span class="l" style="left:1081.1px;top:320.9px;font:400 8.4px/1 'Liberation Sans',sans-serif;color:#34363c;transform:translateX(-50%);">22</span>
<span class="l" style="left:1117.9px;top:320.9px;font:400 8.4px/1 'Liberation Sans',sans-serif;color:#34363c;transform:translateX(-50%);">24</span>
<span class="l" style="left:1154.7px;top:320.9px;font:400 8.4px/1 'Liberation Sans',sans-serif;color:#34363c;transform:translateX(-50%);">26</span>
<span class="l" style="left:1191.5px;top:320.9px;font:400 8.4px/1 'Liberation Sans',sans-serif;color:#34363c;transform:translateX(-50%);">28</span>
<span class="l" style="left:1228.3px;top:320.9px;font:400 8.4px/1 'Liberation Sans',sans-serif;color:#34363c;transform:translateX(-50%);">30</span>
<span class="l" style="left:1265.1px;top:320.9px;font:400 8.4px/1 'Liberation Sans',sans-serif;color:#34363c;transform:translateX(-50%);">32</span>
<span class="l" style="left:1301.9px;top:320.9px;font:400 8.4px/1 'Liberation Sans',sans-serif;color:#34363c;transform:translateX(-50%);">34</span>
<span class="l" style="left:1338.7px;top:320.9px;font:400 8.4px/1 'Liberation Sans',sans-serif;color:#34363c;transform:translateX(-50%);">36</span>
<span class="l" style="left:1375.5px;top:320.9px;font:400 8.4px/1 'Liberation Sans',sans-serif;color:#34363c;transform:translateX(-50%);">38</span>
<span class="l" style="left:1412.3px;top:320.9px;font:400 8.4px/1 'Liberation Sans',sans-serif;color:#34363c;transform:translateX(-50%);">40</span>
<span class="l" style="left:1449.1px;top:320.9px;font:400 8.4px/1 'Liberation Sans',sans-serif;color:#34363c;transform:translateX(-50%);">42</span>
<span class="l" style="left:1485.9px;top:320.9px;font:400 8.4px/1 'Liberation Sans',sans-serif;color:#34363c;transform:translateX(-50%);">44</span>
<span class="l" style="left:1522.7px;top:320.9px;font:400 8.4px/1 'Liberation Sans',sans-serif;color:#34363c;transform:translateX(-50%);">46</span>
<svg class="i" style="left:519.5px;top:322.5px" width="1044" height="4" viewBox="0 0 1044 4" fill="#cfd2d9"><rect x="27.5" y="0" width="1" height="4" /><rect x="64.3" y="0" width="1" height="4" /><rect x="101.1" y="0" width="1" height="4" /><rect x="137.9" y="0" width="1" height="4" /><rect x="174.7" y="0" width="1" height="4" /><rect x="211.5" y="0" width="1" height="4" /><rect x="248.3" y="0" width="1" height="4" /><rect x="285.1" y="0" width="1" height="4" /><rect x="321.9" y="0" width="1" height="4" /><rect x="358.7" y="0" width="1" height="4" /><rect x="395.5" y="0" width="1" height="4" /><rect x="432.3" y="0" width="1" height="4" /><rect x="469.1" y="0" width="1" height="4" /><rect x="505.9" y="0" width="1" height="4" /><rect x="542.7" y="0" width="1" height="4" /><rect x="579.5" y="0" width="1" height="4" /><rect x="616.3" y="0" width="1" height="4" /><rect x="653.1" y="0" width="1" height="4" /><rect x="689.9" y="0" width="1" height="4" /><rect x="726.7" y="0" width="1" height="4" /><rect x="763.5" y="0" width="1" height="4" /><rect x="800.3" y="0" width="1" height="4" /><rect x="837.1" y="0" width="1" height="4" /><rect x="873.9" y="0" width="1" height="4" /><rect x="910.7" y="0" width="1" height="4" /><rect x="947.5" y="0" width="1" height="4" /><rect x="984.3" y="0" width="1" height="4" /></svg>
<svg class="i" style="left:670px;top:311px" width="14" height="30" viewBox="0 0 14 30" ><path d="M2 1h10v4.6L7 10 2 5.600z" fill="#fff" stroke="#7b7e87" stroke-width="1"/><path d="M7 14.200l5 4.600v4.200H2v-4.200z M2 23h10v6H2z" fill="#fff" stroke="#7b7e87" stroke-width="1"/></svg>
<svg class="i" style="left:1397px;top:324px" width="14" height="10" viewBox="0 0 14 10" ><path d="M7 1l5 4.600v3.400H2v-3.400z" fill="#fff" stroke="#7b7e87" stroke-width="1"/></svg>
<svg class="i" style="left:212.5px;top:319.5px" width="7" height="7" viewBox="0 0 7 7" ><path d="M1.200 0v5.600h5.600" fill="none" stroke="#74777f" stroke-width="2.2"/></svg>
<div style="left:203px;top:342.5px;width:19.5px;height:770px;background:#fcfcfe;"></div>
<span class="l vr" style="left:215.8px;top:355.4px">1</span>
<span class="l vr" style="left:215.8px;top:382.82px">2</span>
<span class="l vr" style="left:215.8px;top:410.24px">3</span>
<span class="l vr" style="left:215.8px;top:437.66px">4</span>
<span class="l vr" style="left:215.8px;top:465.08px">5</span>
<span class="l vr" style="left:215.8px;top:492.5px">6</span>
<span class="l vr" style="left:215.8px;top:519.92px">7</span>
<span class="l vr" style="left:215.8px;top:547.34px">8</span>
<span class="l vr" style="left:215.8px;top:574.76px">9</span>
<span class="l vr" style="left:215.8px;top:602.18px">10</span>
<span class="l vr" style="left:215.8px;top:629.6px">11</span>
<span class="l vr" style="left:215.8px;top:657.02px">12</span>
<span class="l vr" style="left:215.8px;top:684.44px">13</span>
<span class="l vr" style="left:215.8px;top:711.86px">14</span>
<span class="l vr" style="left:215.8px;top:739.28px">15</span>
<span class="l vr" style="left:215.8px;top:766.7px">16</span>
<span class="l vr" style="left:215.8px;top:794.12px">17</span>
<span class="l vr" style="left:215.8px;top:821.54px">18</span>
<span class="l vr" style="left:215.8px;top:848.96px">19</span>
<span class="l vr" style="left:215.8px;top:876.38px">20</span>
<span class="l vr" style="left:215.8px;top:903.8px">21</span>
<span class="l vr" style="left:215.8px;top:931.22px">22</span>
<span class="l vr" style="left:215.8px;top:958.64px">23</span>
<span class="l vr" style="left:215.8px;top:986.06px">24</span>
<span class="l vr" style="left:215.8px;top:1013.48px">25</span>
<span class="l vr" style="left:215.8px;top:1040.9px">26</span>
<span class="l vr" style="left:215.8px;top:1068.32px">27</span>
<span class="l vr" style="left:215.8px;top:1095.74px">28</span>
<div style="left:520px;top:340.5px;width:1043px;height:780px;background:#fff;box-shadow:0 0 2px rgba(130,140,170,.45)"></div>
<svg class="i" style="left:629.5px;top:344.5px" width="10" height="16" viewBox="0 0 10 16" fill="#8d9098"><circle cx="1.8" cy="1.8" r="1.25"/><circle cx="7.4" cy="1.8" r="1.25"/><circle cx="1.8" cy="7.4" r="1.25"/><circle cx="7.4" cy="7.4" r="1.25"/><circle cx="1.8" cy="13" r="1.25"/><circle cx="7.4" cy="13" r="1.25"/></svg>
<div style="left:677.7px;top:342.5px;width:1px;height:31.5px;background:#111;"></div>
<svg class="t" style="left:678.6px;top:368.6px" role="img" aria-label="附件 6："><text class="sf" x="0" y="0" font-size="25.2" letter-spacing="-3" fill="#1c1c1c" stroke="#1c1c1c" stroke-width="0.1">附件</text></svg>
<svg class="t" style="left:733.2px;top:368.6px" role="img" aria-label=""><text class="sf" x="0" y="0" font-size="22.5" fill="#1c1c1c" stroke="#1c1c1c" stroke-width="0.1">6</text></svg>
<svg class="t" style="left:744.5px;top:368.2px" role="img" aria-label="："><text class="sf" x="0" y="0" font-size="22" font-weight="700" fill="#0b0b0b">：</text></svg>
<svg class="t" style="left:882.8px;top:417.5px" role="img" aria-label="学术不端行为典型案例"><text class="sf" x="0" y="0" font-size="31.7" font-weight="700" fill="#0a0a0a">学术不端行为典型案例</text></svg>
<svg class="t" style="left:735.6px;top:515px" role="img" aria-label="案例 1：河南开封科技传媒学院毕业设计剽窃案"><text x="0" y="0" font-size="27.3" font-weight="700" letter-spacing="0.76" fill="#0d0d0d">案例</text></svg>
<svg class="t" style="left:798.5px;top:515px" role="img" aria-label=""><text x="0" y="0" font-size="27.3" font-weight="700" fill="#0d0d0d">1：</text></svg>
<svg class="t" style="left:841px;top:515px" role="img" aria-label=""><text x="0" y="0" font-size="27.3" font-weight="700" letter-spacing="0.76" fill="#0d0d0d">河南开封科技传媒学院毕业设计剽窃案</text></svg>
<svg class="t" style="left:734.08px;top:563.9px" role="img" aria-label="事件：学生李某长期关注博主“徐敏君 Moniquexu”，盗"><text class="sf" x="0" y="0" font-size="27.2" letter-spacing="0.6" fill="#1c1c1c"><tspan font-weight="700" fill="#0b0b0b">事件：</tspan><tspan x="83.4">学生李某长期关注博主</tspan><tspan class="cq" x="361.4">“</tspan><tspan x="389.2">徐敏君</tspan></text></svg>
<span class="l" style="left:1212px;top:542.22px;font:400 23.43px/1 'Liberation Mono',sans-serif;color:#363636;text-decoration:underline wavy #e9a0a8 .9px;text-underline-offset:3.5px">Moniquexu</span>
<svg class="t" style="left:1340.6px;top:563.9px" role="img" aria-label=""><text class="sf cq" x="0" y="0" font-size="27.2" fill="#1c1c1c">”</text></svg>
<svg class="t" style="left:1354px;top:563.9px" role="img" aria-label=""><text class="sf" x="0" y="0" font-size="27.2" letter-spacing="-1.4" fill="#1c1c1c">，盗</text></svg>
<svg class="t" style="left:678.3px;top:612.8px" role="img" aria-label="用其多幅画作作为个人毕业设计作品，并伪造创作过程（草"><text class="sf" x="0" y="0" font-size="27.2" letter-spacing="0.84" fill="#1c1c1c">用其多幅画作作为个人毕业设计作品，并伪造创作过程（草</text></svg>
<svg class="t" style="left:678.3px;top:661.7px" role="img" aria-label="图、线稿等）。博主发现后向校方举报并提供举证材料。"><text class="sf" x="0" y="0" font-size="27.2" letter-spacing="0.84" fill="#1c1c1c">图、线稿等）</text></svg>
<svg class="t" style="left:832.64px;top:661.7px" role="img" aria-label=""><text class="sf" x="0" y="0" font-size="27.2" letter-spacing="0.84" fill="#1c1c1c">。博主发现后向校方举报并提供举证材料。</text></svg>
<svg class="t" style="left:734.38px;top:710.6px" role="img" aria-label="处理结果：学校认定剽窃行为属实，取消李某毕业设计"><text class="sf" x="0" y="0" font-size="27.2" letter-spacing="0.84" fill="#1c1c1c"><tspan font-weight="700" fill="#0b0b0b">处理结果：</tspan><tspan x="140.2">学校认定剽窃行为属实，取消李某毕业设计</tspan></text></svg>
<svg class="t" style="left:678.3px;top:759.5px" role="img" aria-label="成绩，延期毕业，并全院通报批评。李某需向原作者公开致"><text class="sf" x="0" y="0" font-size="27.2" letter-spacing="0.84" fill="#1c1c1c">成绩，延期毕业，并全院通报批评。李某需向原作者公开致</text></svg>
<svg class="t" style="left:678.3px;top:808.4px" role="img" aria-label="歉并赔偿损失。"><text class="sf" x="0" y="0" font-size="27.2" letter-spacing="0.84" fill="#1c1c1c">歉并赔偿损失。</text></svg>
<svg class="t" style="left:734.38px;top:857.3px" role="img" aria-label="警示：剽窃、盗用他人作品不仅违反学术规范，还侵犯"><text class="sf" x="0" y="0" font-size="27.2" letter-spacing="0.84" fill="#1c1c1c"><tspan font-weight="700" fill="#0b0b0b">警示：</tspan><tspan x="84.1">剽窃、盗用他人作品不仅违反学术规范，还侵犯</tspan></text></svg>
<svg class="t" style="left:678.3px;top:906.2px" role="img" aria-label="著作权，需承担民事与学籍双重责任。"><text class="sf" x="0" y="0" font-size="27.2" letter-spacing="0.84" fill="#1c1c1c">著作权，需承担民事与学籍双重责任。</text></svg>
<svg class="t" style="left:735.6px;top:1005.9px" role="img" aria-label="案例 2：西安电子科技大学毕业设计代做案"><text x="0" y="0" font-size="27.3" font-weight="700" letter-spacing="0.76" fill="#0d0d0d">案例</text></svg>
<svg class="t" style="left:797.5px;top:1005.9px" role="img" aria-label=""><text x="0" y="0" font-size="27.3" font-weight="700" fill="#0d0d0d">2：</text></svg>
<svg class="t" style="left:841px;top:1005.9px" role="img" aria-label=""><text x="0" y="0" font-size="27.3" font-weight="700" letter-spacing="0.76" fill="#0d0d0d">西安电子科技大学毕业设计代做案</text></svg>
<svg class="t" style="left:734.38px;top:1054.2px" role="img" aria-label="事件：计算机学院本科生雷某某、卢某某通过网络平台"><text class="sf" x="0" y="0" font-size="27.2" letter-spacing="0.84" fill="#1c1c1c"><tspan font-weight="700" fill="#0b0b0b">事件：</tspan><tspan x="84.1">计算机学院本科生雷某某、卢某某通过网络平台</tspan></text></svg>
<svg class="t" style="left:678.3px;top:1107px" role="img" aria-label="购买代码，用于完成毕业设计的实验部分；后续还以“举报"><text class="sf" x="0" y="0" font-size="27.2" letter-spacing="0.84" fill="#1c1c1c">购买代码，用于完成毕业设计的实验部分；后续还以<tspan class="cq" x="644.9">“</tspan><tspan x="673">举报</tspan></text></svg>
<svg class="i" style="left:1184.5px;top:699.5px" width="14" height="20" viewBox="0 0 14 20" ><path d="M1.500 1v14.500l3.600-3.200 2.400 5.600 2.400-1-2.400-5.500h4.600z" fill="#111" stroke="#fff" stroke-width=".9"/></svg>
</main>
<!-- tencent -->
<div style="left:0px;top:161px;width:203px;height:939px;background:#000;"></div>
<div style="left:1929px;top:161px;width:203px;height:939px;background:#000;"></div>
<header aria-label="会议标题栏">
<div style="left:0px;top:0px;width:2772px;height:161px;background:#232426;"></div>
<svg class="i" style="left:100.7px;top:45px" width="45" height="72" viewBox="0 0 45 72" ><path d="M35.5 7.5 L7.5 35.5 L35.5 63.5" fill="none" stroke="#ededed" stroke-width="5" stroke-linejoin="miter"/></svg>
<svg class="t" style="left:1163px;top:97.6px" role="img" aria-label="腾讯会议"><text x="0" y="0" font-size="48.6" fill="#fff">腾讯会议</text></svg>
<svg class="i" style="left:1384px;top:58px" width="46" height="46" viewBox="0 0 46 46" ><circle cx="23" cy="22.5" r="19" fill="none" stroke="#c9c9c9" stroke-width="5"/><circle cx="23.3" cy="12.6" r="3.3" fill="#c9c9c9"/><path d="M18 18.2h8.6v12.6h2.6v2.9H18v-2.9h3V21.1h-3z" fill="#c9c9c9"/></svg>
<div style="left:2361px;top:24px;width:336px;height:112px;background:#1c1d20;border-radius:56px;box-shadow:inset 0 0 0 1px #303134"></div>
<svg class="i" style="left:2430px;top:48px" width="56" height="68" viewBox="0 0 56 68" ><rect x="17" y="4.8" width="22.5" height="42.5" rx="11.25" fill="#bdbdbd"/><path d="M9.2 28v4.5a19 19 0 0 0 38 0V28" fill="none" stroke="#bdbdbd" stroke-width="5"/><path d="M28.2 51v8" stroke="#bdbdbd" stroke-width="5.5"/><rect x="11" y="57" width="34" height="6" rx="2" fill="#bdbdbd"/></svg>
<div style="left:2529px;top:48px;width:1px;height:65px;background:#37383b;"></div>
<svg class="i" style="left:2584px;top:49px" width="64" height="64" viewBox="0 0 64 64" ><circle cx="32" cy="31.5" r="27" fill="none" stroke="#d9d9d9" stroke-width="8"/><circle cx="32" cy="31.5" r="11.7" fill="#d9d9d9"/></svg>
</header>
<aside aria-label="参会成员">
<div style="left:2132px;top:161px;width:640px;height:356px;background:#2c3032;"></div>
<div style="left:2132px;top:522px;width:640px;height:357px;background:#2c3032;"></div>
<div style="left:2132px;top:884px;width:640px;height:216px;background:#2c3032;"></div>
<div style="left:2382px;top:248px;width:140px;height:140px;background:#0a6cff;border-radius:50%"></div>
<svg class="t" style="left:2396px;top:338.5px" role="img" aria-label="长健"><text x="0" y="0" font-size="55.3" fill="#fff">长健</text></svg>
<svg class="t" style="left:2212px;top:492.3px" role="img" aria-label="李长健"><text x="0" y="0" font-size="38.2" fill="#fff">李长健</text></svg>
<svg class="i" style="left:2382px;top:609px" width="140" height="140" viewBox="0 0 140 140" ><defs><clipPath id="c2"><circle cx="70" cy="70" r="70"/></clipPath><linearGradient id="l2" x1="0" y1="0" x2="0" y2="1"><stop offset="0" stop-color="#f4f7fa"/><stop offset=".45" stop-color="#eef2f5"/><stop offset="1" stop-color="#c9d9e2"/></linearGradient><linearGradient id="m2" x1="0" y1="0" x2="0" y2="1"><stop offset="0" stop-color="#f1f4f7"/><stop offset="1" stop-color="#d3dfe7"/></linearGradient></defs><g clip-path="url(#c2)"><rect width="140" height="140" fill="url(#l2)"/><circle cx="33.500" cy="25" r="9.500" fill="#dfe4ec"/><path d="M-4 96L35 30 62 72 97 38 146 86V140H-4z" fill="url(#m2)"/><path d="M35 30L62 72 97 38 120 62 84 96 30 100z" fill="#f6f8fa" opacity=".55"/></g></svg>
<svg class="t" style="left:2411.5px;top:724.8px" role="img" aria-label="暂时无法查看"><text x="0" y="0" font-size="13.6" fill="#7e94a9">暂时无法查看</text></svg>
<svg class="t" style="left:2214px;top:854px" role="img" aria-label="王岩"><text x="0" y="0" font-size="36" fill="#fff">王岩</text></svg>
<svg class="i" style="left:2382px;top:971px" width="140" height="140" viewBox="0 0 140 140" ><defs><clipPath id="c3"><circle cx="70" cy="70" r="70"/></clipPath></defs><g clip-path="url(#c3)"><rect width="140" height="140" fill="#8fd6c6"/><path d="M14 140C18 112 24 92 44 84L64 78 92 80 108 72 118 62 138 56 140 68 124 80 122 104 118 140z" fill="#f1f1df"/><path d="M88 8L96 28 108 36 138 56 128 68 110 62 96 40 86 30z" fill="#f3f2e2"/><path d="M40 82C46 78 60 76 70 77 80 76 90 78 96 80 84 90 74 92 68 91 58 92 48 88 40 82z" fill="#a5742b"/><path d="M52 72h24l4 10H50z" fill="#f5efd8"/><path d="M24 28L38 22C42 8 62 2 78 8 96 12 104 34 98 52 94 64 88 68 84 72 78 64 74 74 68 70 62 78 56 68 48 74 44 62 38 50 36 44 28 40 26 34 24 28z" fill="#f3e4ab"/><path d="M50 30C46 42 48 52 52 60M66 26c6 12 6 26 2 38M84 30c4 10 2 20 0 28" fill="none" stroke="#cdb873" stroke-width="1.200"/><rect x="48" y="103" width="37" height="40" fill="#f8f8ee" stroke="#9ba38d" stroke-width=".8"/><path d="M58 110l-2 14M64 109l4 5M70 108l4 4M62 126h10l-2 10M66 122l-4 12" fill="none" stroke="#6f7466" stroke-width="1.200"/><path d="M36 100l6 22M112 84c-2 10-2 22 0 32" fill="none" stroke="#b9bea6" stroke-width="1"/></g></svg>
<svg class="i" style="left:2150px;top:448px" width="56" height="60" viewBox="0 0 56 60" ><g transform="translate(6 5) scale(1)"><rect x="12" y="1" width="20" height="35" rx="10" fill="#fff"/><path d="M3 25.700A18.750 18.750 0 0 0 40.200 25.700" fill="none" stroke="#fff" stroke-width="4.300"/><path d="M21.600 43v7.200" stroke="#fff" stroke-width="5"/></g><path d="M8 50.500L47.500 11" stroke="#2c3032" stroke-width="8.500"/><path d="M7.500 50L47.500 10.500" stroke="#f0605b" stroke-width="4.600"/></svg>
<svg class="i" style="left:2150px;top:810px" width="56" height="60" viewBox="0 0 56 60" ><defs><linearGradient id="mg" x1="0" y1="0" x2="0" y2="1"><stop offset=".38" stop-color="#fff"/><stop offset=".4" stop-color="#3ee046"/></linearGradient></defs><rect x="17" y="6" width="22" height="35.500" rx="11" fill="url(#mg)"/><path d="M9 30.200A19.100 19.100 0 0 0 46.300 30.200" fill="none" stroke="#fff" stroke-width="4.200"/><path d="M27.650 45.500v9" stroke="#fff" stroke-width="5"/></svg>
<div style="left:2048px;top:564px;width:84px;height:272px;background:#161616;border-radius:40px 0 0 40px"></div>
<svg class="i" style="left:2083px;top:678px" width="32" height="46" viewBox="0 0 32 46" ><path d="M1 1 L29 23 L1 45z" fill="#fff"/></svg>
</aside>
<footer aria-label="会议工具栏">
<div style="left:0px;top:1100px;width:2772px;height:140px;background:#232426;"></div>
<svg class="t" style="left:259px;top:1183.5px" role="img" aria-label="开启听筒"><text x="0" y="0" font-size="34.6" fill="#b8b8b8">开启听筒</text></svg>
<svg class="t" style="left:573px;top:1183.5px" role="img" aria-label="解除静音"><text x="0" y="0" font-size="34.6" fill="#b8b8b8">解除静音</text></svg>
<svg class="t" style="left:888.5px;top:1183.5px" role="img" aria-label="开启视频"><text x="0" y="0" font-size="34.6" fill="#b8b8b8">开启视频</text></svg>
<svg class="t" style="left:1202.5px;top:1183.5px" role="img" aria-label="邀请"><text x="0" y="0" font-size="34.6" fill="#b8b8b8">邀请</text></svg>
<svg class="t" style="left:1518px;top:1183.5px" role="img" aria-label="成员(93)"><text x="0" y="0" font-size="34.6" fill="#b8b8b8">成员</text></svg>
<svg class="t" style="left:1589.5px;top:1185px" role="img" aria-label=""><text x="0" y="0" font-size="38" fill="#b8b8b8">(93)</text></svg>
<svg class="t" style="left:1834px;top:1183.5px" role="img" aria-label="聊天"><text x="0" y="0" font-size="34.6" fill="#b8b8b8">聊天</text></svg>
<svg class="t" style="left:2526.4px;top:1190.5px" role="img" aria-label="退出"><text x="0" y="0" font-size="55.6" fill="#f1514e">退出</text></svg>
<svg class="i" style="left:145px;top:1128px" width="104" height="82" viewBox="0 0 104 82" ><path d="M8.500 23h15L51.500 5.200c3.500-2 7.500.2 7.500 4.400v62.800c0 4.200-4 6.400-7.500 4.400L23.500 59h-15A4.700 4.700 0 0 1 3.800 54.300V27.700A4.700 4.700 0 0 1 8.500 23z" fill="#fff"/><path d="M67 18.700A24.200 24.200 0 0 1 67 64.900M79.800 11.900A34.700 34.700 0 0 1 79.800 71.700" fill="none" stroke="#fff" stroke-width="5" stroke-linecap="round"/></svg>
<svg class="i" style="left:470px;top:1124px" width="84" height="92" viewBox="0 0 84 92" ><rect x="25.500" y="5" width="31" height="57" rx="15.500" fill="#fff"/><path d="M15.800 44v3.500a25.200 25.200 0 0 0 50.400 0V44" fill="none" stroke="#fff" stroke-width="5.600" stroke-linecap="round"/><path d="M41 72v8" stroke="#fff" stroke-width="6"/><rect x="22" y="79" width="38" height="7.600" rx="3" fill="#fff"/><path d="M12.500 80L75.500 17" stroke="#232426" stroke-width="9"/><path d="M10.500 78L73.500 15" stroke="#f1524b" stroke-width="6" stroke-linecap="round"/></svg>
<svg class="i" style="left:770px;top:1128px" width="110" height="84" viewBox="0 0 110 84" ><rect x="9" y="13.500" width="62.500" height="56.500" rx="7" fill="#fff"/><path d="M77.500 27.500L97 14.500c2.500-1.700 5.800 0 5.800 3v48.500c0 3-3.300 4.700-5.800 3L77.500 56c-1.600-1.100-2.500-2.600-2.500-4.500V32c0-1.900.9-3.400 2.500-4.500z" fill="#fff"/><path d="M12.500 76.500L75 14" stroke="#232426" stroke-width="9"/><path d="M10.500 74.500L73 12" stroke="#f1524b" stroke-width="6" stroke-linecap="round"/></svg>
<svg class="i" style="left:1097px;top:1127px" width="96" height="82" viewBox="0 0 96 82" ><path d="M32.500 7.500c9.500 0 16 7.500 16 17 0 2.500-.4 4.800-1 6.800 1.600.8 2.200 3 1.600 5.400-.6 2.600-2 4.200-3.600 4.400-1 3.200-2.600 5.800-4.500 7.800v6.600c0 2 1.200 3.600 3.200 4.400l14.500 5.600c4.200 1.600 6.800 4.400 7.800 7.800H-1.500c1-3.400 3.600-6.200 7.800-7.800L20.800 60c2-.8 3.200-2.400 3.200-4.400v-6.600c-1.900-2-3.500-4.600-4.500-7.800-1.600-.2-3-1.800-3.600-4.400-.6-2.400 0-4.600 1.600-5.400-.6-2-1-4.300-1-6.800 0-9.500 6.500-17 16-17z" fill="#fff"/><circle cx="70" cy="56" r="21.500" fill="#232426"/><circle cx="70" cy="56" r="18" fill="#fff"/><path d="M60.500 56h19M70 46.500v19" stroke="#232426" stroke-width="5"/></svg>
<svg class="i" style="left:1413.5px;top:1128px" width="96" height="82" viewBox="0 0 96 82" ><path d="M32.500 7.500c9.500 0 16 7.500 16 17 0 2.500-.4 4.800-1 6.800 1.600.8 2.200 3 1.600 5.400-.6 2.600-2 4.200-3.600 4.400-1 3.200-2.600 5.800-4.500 7.800v6.600c0 2 1.200 3.600 3.200 4.400l14.500 5.600c4.200 1.600 6.800 4.400 7.800 7.800H-1.500c1-3.400 3.600-6.200 7.800-7.800L20.800 60c2-.8 3.200-2.400 3.200-4.400v-6.600c-1.900-2-3.500-4.600-4.500-7.800-1.600-.2-3-1.800-3.600-4.400-.6-2.400 0-4.600 1.600-5.400-.6-2-1-4.300-1-6.800 0-9.500 6.500-17 16-17z" fill="#fff" transform="translate(20.500 0)"/><path d="M32.500 7.500c9.500 0 16 7.500 16 17 0 2.500-.4 4.800-1 6.800 1.600.8 2.200 3 1.600 5.400-.6 2.600-2 4.200-3.600 4.400-1 3.200-2.600 5.800-4.500 7.800v6.600c0 2 1.200 3.600 3.200 4.400l14.500 5.600c4.200 1.600 6.800 4.400 7.800 7.800H-1.500c1-3.400 3.600-6.200 7.800-7.800L20.800 60c2-.8 3.200-2.400 3.200-4.400v-6.600c-1.900-2-3.500-4.600-4.500-7.800-1.600-.2-3-1.800-3.600-4.400-.6-2.400 0-4.600 1.600-5.400-.6-2-1-4.300-1-6.800 0-9.500 6.500-17 16-17z" fill="#232426" transform="translate(4.500 0)"/><path d="M32.500 7.500c9.500 0 16 7.500 16 17 0 2.500-.4 4.800-1 6.800 1.600.8 2.200 3 1.600 5.400-.6 2.600-2 4.200-3.600 4.400-1 3.200-2.600 5.800-4.500 7.800v6.600c0 2 1.200 3.600 3.200 4.400l14.500 5.600c4.200 1.600 6.800 4.400 7.800 7.800H-1.500c1-3.400 3.600-6.200 7.800-7.800L20.800 60c2-.8 3.200-2.400 3.200-4.400v-6.600c-1.900-2-3.500-4.600-4.500-7.800-1.600-.2-3-1.800-3.600-4.400-.6-2.400 0-4.600 1.600-5.400-.6-2-1-4.300-1-6.800 0-9.500 6.500-17 16-17z" fill="#fff" transform="translate(0 0)"/></svg>
<svg class="i" style="left:1727px;top:1135px" width="92" height="82" viewBox="0 0 92 82" ><path d="M12 3h64a9 9 0 0 1 9 9v43a9 9 0 0 1-9 9H29L6.500 78.500c-2 1.300-4-.2-4-2.500V12a9.500 9 0 0 1 9.500-9z" fill="#fff"/><circle cx="19.400" cy="32.600" r="6.400" fill="#1f2023"/><circle cx="43.500" cy="32.600" r="6.400" fill="#1f2023"/><circle cx="67.600" cy="32.600" r="6.400" fill="#1f2023"/></svg>
<div style="left:1778px;top:1099.8px;width:63px;height:63px;background:#f4502e;border-radius:50%"></div>
<span class="l" style="left:1809.5px;top:1114.15px;font:700 30px/1 'Liberation Sans',sans-serif;color:#fff;transform:translateX(-50%);">3</span>
</footer>
<!-- overlay -->
<section aria-label="浮动控件">
<div style="left:0;top:0;width:2772px;height:1100px;overflow:hidden">
<div style="left:216px;top:1079.5px;width:116px;height:20.5px;background:#70747b;border-radius:8px 8px 0 0"></div>
<svg class="i" style="left:224px;top:1085px" width="20" height="20" viewBox="-10 -10 20 20" fill="none" stroke="#a9acb2" stroke-width="1.3" stroke-linecap="round" stroke-linejoin="round" ><circle r="7.400"/><path d="M-2.800 -2v2M2.800 -2v2"/></svg>
<svg class="t" style="left:249.5px;top:1103px" role="img" aria-label="说点什么"><text x="0" y="0" font-size="11.6" fill="#b4b7bd">说点什么</text></svg>
</div>
<div style="left:140px;top:841px;width:147.5px;height:147.5px;background:rgba(22,22,24,.6);border-radius:50%"></div>
<svg class="i" style="left:170px;top:875px" width="90" height="86" viewBox="0 0 90 86" ><path d="M69.500 42V20a9.500 9.500 0 0 0-9.500-9.500H20A9.500 9.500 0 0 0 10.500 20v33A9.500 9.500 0 0 0 20 62.500h17" fill="none" stroke="#dcdcdc" stroke-width="7"/><circle cx="28.600" cy="28.600" r="3.800" fill="#e6e6e6"/><rect x="36.500" y="24.800" width="21.500" height="7.600" rx="3.800" fill="#e6e6e6"/><circle cx="24.500" cy="43.400" r="3.800" fill="#e6e6e6"/><rect x="32.500" y="39.600" width="15" height="7.600" rx="3.800" fill="#e6e6e6"/><rect x="38" y="48.500" width="44.500" height="29.500" rx="14.700" fill="#4e5156"/><rect x="40.300" y="50.800" width="40" height="25" rx="12.500" fill="#1fc15e"/><circle cx="67.500" cy="63.300" r="12.800" fill="#fff"/></svg>
</section>
</div></body></html>
